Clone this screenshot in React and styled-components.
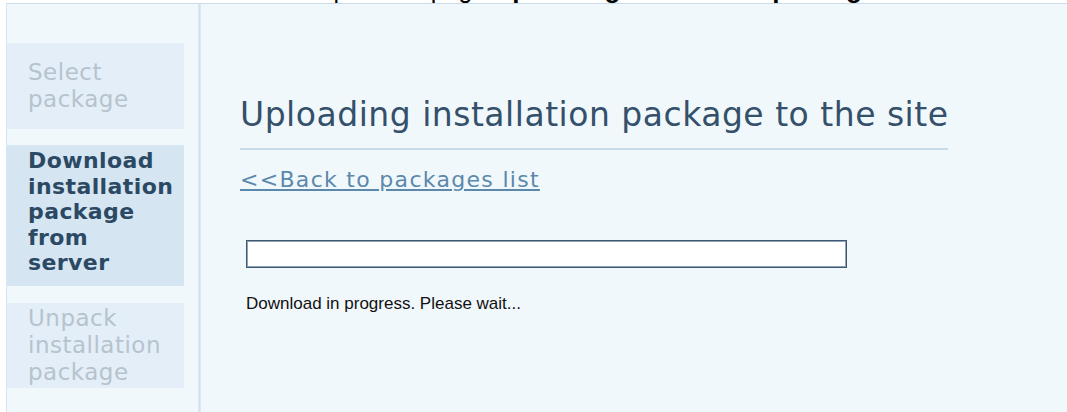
import React from "react";
import styled, { createGlobalStyle } from "styled-components";

const steps = [
  { lines: ["Select", "package"], active: false },
  { lines: ["Download", "installation", "package", "from", "server"], active: true },
  { lines: ["Unpack", "installation", "package"], active: false },
];

const App = () => {
  return (
    <>
      <GlobalStyle />
      <Caption>
        <CaptionText>
          Help on the page <b>Uploading installation package</b>
        </CaptionText>
      </Caption>
      <Frame>
        <Side>
          {steps.map((step) => (
            <Step key={step.lines.join(" ")} active={step.active}>
              <StepLabel>
                {step.lines.map((line) => (
                  <span key={line}>{line}</span>
                ))}
              </StepLabel>
            </Step>
          ))}
        </Side>
        <Divider />
        <Main>
          <Title>Uploading installation package to the site</Title>
          <BackLink href="#">&lt;&lt;Back to packages list</BackLink>
          <ProgressBar>
            <ProgressFill style={{ width: "0%" }} />
          </ProgressBar>
          <Status>Download in progress. Please wait...</Status>
        </Main>
      </Frame>
    </>
  );
};

const GlobalStyle = createGlobalStyle`
  html, body {
    margin: 0;
    padding: 0;
    background: #ffffff;
  }
  body {
    font-family: "DejaVu Sans", Verdana, sans-serif;
  }
`;

// ------------ Page heading (scrolled off the top) ------------ //
const Caption = styled.div`
  height: 3px;
  overflow: hidden;
  background: #ffffff;
`;

const CaptionText = styled.div`
  margin-top: -23px;
  padding-left: 296px;
  font-family: "Liberation Sans", Arial, sans-serif;
  font-size: 25px;
  line-height: 25px;
  color: #000000;
  white-space: nowrap;
  b {
    font-size: 26px;
  }
`;

// ------------ Wizard frame ------------ //
const Frame = styled.div`
  display: flex;
  margin-left: 6px;
  min-height: calc(100vh - 4px);
  background: #f1f8fc;
  border-top: 1px solid #c9dbe9;
  border-left: 1px solid #d7e6f1;
`;

const Side = styled.div`
  display: flex;
  flex-direction: column;
  width: 191px;
  flex-shrink: 0;
  padding-top: 39px;
  & > * + * {
    margin-top: 16px;
  }
  & > *:last-child {
    margin-top: 17px;
  }
`;

const Step = styled.div`
  display: flex;
  align-items: ${({ active }) => (active ? "flex-start" : "center")};
  width: 177px;
  min-height: ${({ active }) => (active ? "140px" : "85px")};
  box-sizing: border-box;
  padding: ${({ active }) => (active ? "3px 0 10px 21px" : "0 0 0 21px")};
  background: ${({ active }) => (active ? "#d6e5f2" : "#e4eef8")};
  color: ${({ active }) => (active ? "#2c4964" : "#b6c3cd")};
  font-size: ${({ active }) => (active ? "22px" : "23px")};
  font-weight: ${({ active }) => (active ? 700 : 400)};
  letter-spacing: ${({ active }) => (active ? "0.4px" : "0.5px")};
  line-height: ${({ active }) => (active ? "25.5px" : "27px")};
  &:first-child {
    min-height: 86px;
  }
`;

const StepLabel = styled.div`
  display: flex;
  flex-direction: column;
  white-space: nowrap;
`;

const Divider = styled.div`
  width: 3px;
  flex-shrink: 0;
  background: linear-gradient(to right, #e0ecf6, #d2e2ef, #e0ecf6);
`;

// ------------ Content ------------ //
const Main = styled.div`
  display: flex;
  flex-direction: column;
  align-items: flex-start;
  padding: 92px 0 0 39px;
`;

const Title = styled.h1`
  margin: 0;
  width: 708px;
  padding-bottom: 14px;
  border-bottom: 2px solid #c7dbe9;
  font-size: 33px;
  font-weight: 400;
  letter-spacing: 0.5px;
  line-height: 38px;
  color: #34506a;
  white-space: nowrap;
`;

const BackLink = styled.a`
  margin-top: 17px;
  font-size: 22px;
  letter-spacing: 1.3px;
  line-height: 26px;
  color: #5b88ab;
  text-decoration: underline;
`;

const ProgressBar = styled.div`
  margin: 47px 0 0 6px;
  width: 601px;
  height: 28px;
  box-sizing: border-box;
  background: #ffffff;
  border: 1px solid #3f5870;
  box-shadow: inset 0 0 0 1px #8ea2b8;
`;

const ProgressFill = styled.div`
  height: 100%;
  background: #5b88ab;
`;

const Status = styled.div`
  margin: 26px 0 0 6px;
  font-family: "Liberation Sans", Arial, sans-serif;
  font-size: 17px;
  line-height: 20px;
  color: #111111;
`;

export default App;
